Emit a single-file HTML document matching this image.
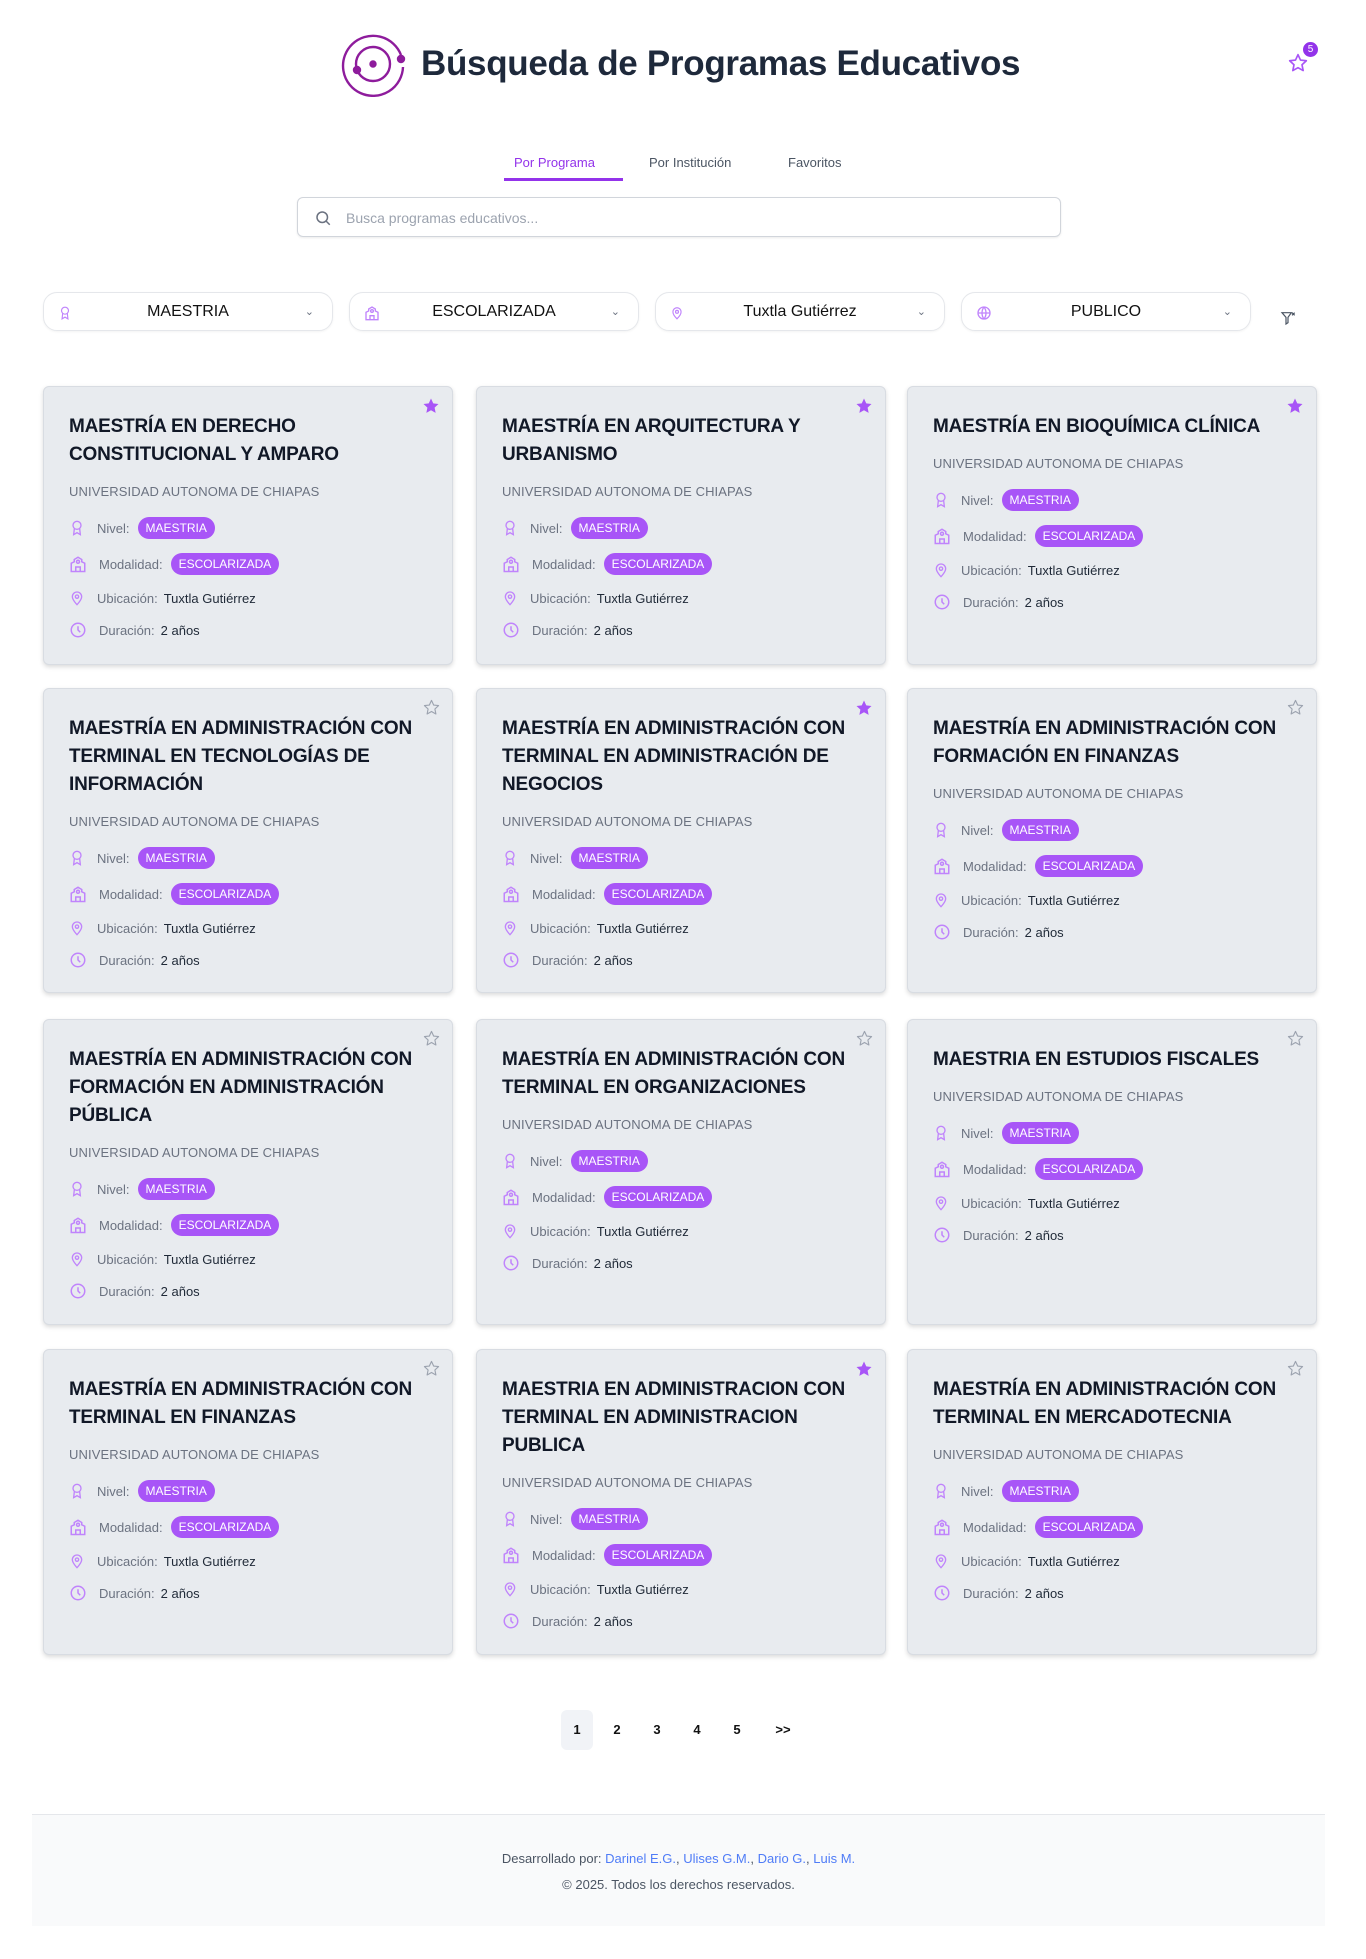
<!DOCTYPE html>
<html><head><meta charset="utf-8"><style>
*{box-sizing:border-box;margin:0;padding:0}
body{width:1366px;height:1959px;background:#fff;font-family:"Liberation Sans",sans-serif;position:relative;color:#1f2937;overflow:hidden}
.abs{position:absolute}
h1{position:absolute;left:421px;top:44px;font-size:35px;font-weight:bold;color:#1e293b;letter-spacing:-0.3px;white-space:nowrap}
.tab{position:absolute;top:155px;font-size:13px;color:#4b5563}
.search{position:absolute;left:297px;top:197px;width:764px;height:40px;border:1px solid #d1d5db;border-radius:6px;box-shadow:0 1px 2px rgba(0,0,0,.08)}
.search span{position:absolute;left:48px;top:12px;font-size:14px;color:#9ca3af}
.sel{position:absolute;top:292px;width:290px;height:39px;border:1px solid #e5e7eb;border-radius:14px;box-shadow:0 1px 2px rgba(0,0,0,.05)}
.sel .t{position:absolute;left:0;right:0;top:10px;text-align:center;font-size:16px;color:#111}
.sel svg.i{position:absolute;left:14px;top:12px}
.sel .c{position:absolute;right:18px;top:12px;font-size:11px;color:#6b7280}
.card{position:absolute;width:410px;background:#e8ebef;border-radius:6px;border:1px solid #d8dce2;box-shadow:0 2px 5px rgba(0,0,0,.15);padding:26px 25px 0 25px}
.card h3{font-size:19px;line-height:28px;font-weight:bold;color:#111827;width:360px;letter-spacing:-0.2px}
.uni{font-size:13px;color:#6b7280;margin-top:15px;height:20px;letter-spacing:.1px}
.row{display:flex;align-items:center;font-size:13px;color:#6b7280;height:24px}
.row svg{margin-right:12px}
.row b{font-weight:normal;color:#1f2937;margin-left:6px}
.bdg{background:#a855f7;color:#fff;font-size:12px;border-radius:12px;padding:4px 8px;margin-left:8px}
.star{position:absolute;right:12px;top:10px}
.pg{position:absolute;top:1710px;width:32px;height:40px;line-height:40px;text-align:center;font-size:13px;font-weight:bold;color:#111}
footer{position:absolute;left:32px;top:1814px;width:1293px;height:112px;background:#f9fafb;border-top:1px solid #e5e7eb;text-align:center;font-size:13px;color:#4b5563}
footer a{color:#4f7cf7;text-decoration:none}
</style></head><body>
<svg class="abs" style="left:340px;top:31px" width="66" height="66" viewBox="0 0 66 66" fill="none" stroke="#8e1c9c" stroke-width="2.4">
<path d="M61 24 A30 30 0 1 0 63 36"/><circle cx="33" cy="33" r="17"/><circle cx="33" cy="33" r="2.5" fill="#8e1c9c"/><circle cx="61" cy="28" r="3" fill="#8e1c9c"/><circle cx="17" cy="39" r="3" fill="#8e1c9c"/></svg>
<h1>Búsqueda de Programas Educativos</h1>
<svg class="abs" style="left:1288px;top:53px" width="20" height="20" viewBox="0 0 24 24" fill="none" stroke="#a855f7" stroke-width="2" stroke-linejoin="round"><path d="M12 2l3 6.5 7 .8-5.2 4.8 1.4 7L12 17.6 5.8 21.1l1.4-7L2 9.3l7-.8z"/></svg>
<div class="abs" style="left:1303px;top:42px;width:15px;height:15px;border-radius:50%;background:#9333ea;color:#fff;font-size:10px;text-align:center;line-height:15px">5</div>
<div class="tab" style="left:514px;color:#9333ea">Por Programa</div>
<div class="abs" style="left:504px;top:178px;width:119px;height:3px;background:#9333ea"></div>
<div class="tab" style="left:649px">Por Institución</div>
<div class="tab" style="left:788px">Favoritos</div>
<div class="search"><svg class="abs" style="left:16px;top:11px" width="18" height="18" viewBox="0 0 24 24" fill="none" stroke="#6b7280" stroke-width="2"><circle cx="11" cy="11" r="7"/><path d="M16 16l5 5"/></svg><span>Busca programas educativos...</span></div>
<div class="sel" style="left:43px"><svg class="i" width="14" height="16" viewBox="0 0 24 24" fill="none" stroke="#c084fc" stroke-width="2"><circle cx="12" cy="8" r="6"/><path d="M8 13l-1 9 5-3 5 3-1-9"/></svg><div class="t">MAESTRIA</div><div class="c">&#8964;</div></div>
<div class="sel" style="left:349px"><svg class="i" width="16" height="16" viewBox="0 0 24 24" fill="none" stroke="#c084fc" stroke-width="2"><path d="M3 22V11l4-2V6l5-3 5 3v3l4 2v11z"/><circle cx="12" cy="9" r="2"/><path d="M9 22v-6h6v6"/></svg><div class="t">ESCOLARIZADA</div><div class="c">&#8964;</div></div>
<div class="sel" style="left:655px"><svg class="i" width="14" height="16" viewBox="0 0 24 24" fill="none" stroke="#c084fc" stroke-width="2"><path d="M12 22s-7-7-7-12a7 7 0 0114 0c0 5-7 12-7 12z"/><circle cx="12" cy="10" r="2.5"/></svg><div class="t">Tuxtla Gutiérrez</div><div class="c">&#8964;</div></div>
<div class="sel" style="left:961px"><svg class="i" width="16" height="16" viewBox="0 0 24 24" fill="none" stroke="#c084fc" stroke-width="2"><circle cx="12" cy="12" r="9"/><path d="M3 12h18M12 3c-4 5-4 13 0 18M12 3c4 5 4 13 0 18"/></svg><div class="t">PUBLICO</div><div class="c">&#8964;</div></div>
<svg class="abs" style="left:1280px;top:310px" width="16" height="16" viewBox="0 0 24 24" fill="none" stroke="#4b5563" stroke-width="1.8"><path d="M3 4h14l-5 7v8l-3 2v-10z"/><path d="M18 4l4 4M22 4l-4 4"/></svg>
<div id="cards"></div>
<div class="pg" style="left:561px;background:#f1f3f7;border-radius:6px">1</div>
<div class="pg" style="left:601px">2</div>
<div class="pg" style="left:641px">3</div>
<div class="pg" style="left:681px">4</div>
<div class="pg" style="left:721px">5</div>
<div class="pg" style="left:767px">&gt;&gt;</div>
<footer><div style="margin-top:36px">Desarrollado por: <a>Darinel E.G.</a>, <a>Ulises G.M.</a>, <a>Dario G.</a>, <a>Luis M.</a></div><div style="margin-top:11px">© 2025. Todos los derechos reservados.</div></footer>
<script>
const data=[
["MAESTRÍA EN DERECHO CONSTITUCIONAL Y AMPARO",1],["MAESTRÍA EN ARQUITECTURA Y URBANISMO",1],["MAESTRÍA EN BIOQUÍMICA CLÍNICA",1],
["MAESTRÍA EN ADMINISTRACIÓN CON TERMINAL EN TECNOLOGÍAS DE INFORMACIÓN",0],["MAESTRÍA EN ADMINISTRACIÓN CON TERMINAL EN ADMINISTRACIÓN DE NEGOCIOS",1],["MAESTRÍA EN ADMINISTRACIÓN CON FORMACIÓN EN FINANZAS",0],
["MAESTRÍA EN ADMINISTRACIÓN CON FORMACIÓN EN ADMINISTRACIÓN PÚBLICA",0],["MAESTRÍA EN ADMINISTRACIÓN CON TERMINAL EN ORGANIZACIONES",0],["MAESTRIA EN ESTUDIOS FISCALES",0],
["MAESTRÍA EN ADMINISTRACIÓN CON TERMINAL EN FINANZAS",0],["MAESTRIA EN ADMINISTRACION CON TERMINAL EN ADMINISTRACION PUBLICA",1],["MAESTRÍA EN ADMINISTRACIÓN CON TERMINAL EN MERCADOTECNIA",0]];
const xs=[43,476,907],ys=[386,688,1019,1349],hs=[279,305,306,306];
const ic={n:'<svg width="16" height="18" viewBox="0 0 24 24" fill="none" stroke="#c084fc" stroke-width="2"><circle cx="12" cy="8" r="6"/><path d="M8 13l-1 9 5-3 5 3-1-9"/></svg>',
m:'<svg width="18" height="18" viewBox="0 0 24 24" fill="none" stroke="#c084fc" stroke-width="2"><path d="M3 22V11l4-2V6l5-3 5 3v3l4 2v11z"/><circle cx="12" cy="9" r="2"/><path d="M9 22v-6h6v6"/></svg>',
u:'<svg width="16" height="18" viewBox="0 0 24 24" fill="none" stroke="#c084fc" stroke-width="2"><path d="M12 22s-7-7-7-12a7 7 0 0114 0c0 5-7 12-7 12z"/><circle cx="12" cy="10" r="2.5"/></svg>',
d:'<svg width="18" height="18" viewBox="0 0 24 24" fill="none" stroke="#c084fc" stroke-width="2"><circle cx="12" cy="12" r="9"/><path d="M12 7v5l3 3"/></svg>'};
let h='';
data.forEach((d,i)=>{const r=Math.floor(i/3),c=i%3;
const st=d[1]?'<svg class="star" width="18" height="18" viewBox="0 0 24 24" fill="#a855f7"><path d="M12 2l3 6.5 7 .8-5.2 4.8 1.4 7L12 17.6 5.8 21.1l1.4-7L2 9.3l7-.8z"/></svg>':'<svg class="star" width="17" height="17" viewBox="0 0 24 24" fill="none" stroke="#9ca3af" stroke-width="1.6" stroke-linejoin="round"><path d="M12 2l3 6.5 7 .8-5.2 4.8 1.4 7L12 17.6 5.8 21.1l1.4-7L2 9.3l7-.8z"/></svg>';
h+=`<div class="card" style="left:${xs[c]}px;top:${ys[r]}px;height:${hs[r]}px">${st}<h3>${d[0]}</h3><div class="uni">UNIVERSIDAD AUTONOMA DE CHIAPAS</div>
<div class="row" style="margin-top:12px">${ic.n}Nivel:<span class="bdg">MAESTRIA</span></div>
<div class="row" style="margin-top:12px">${ic.m}Modalidad:<span class="bdg">ESCOLARIZADA</span></div>
<div class="row" style="margin-top:10px">${ic.u}Ubicación:<b>Tuxtla Gutiérrez</b></div>
<div class="row" style="margin-top:8px">${ic.d}Duración:<b>2 años</b></div></div>`;});
document.getElementById('cards').innerHTML=h;
</script>
</body></html>
